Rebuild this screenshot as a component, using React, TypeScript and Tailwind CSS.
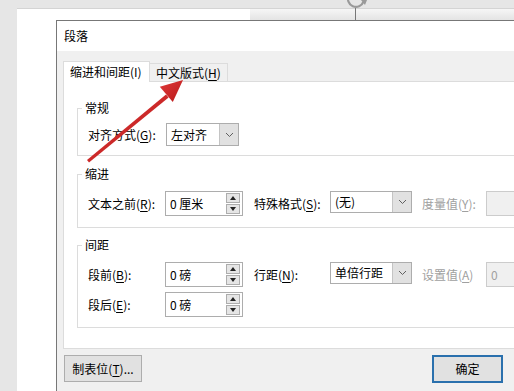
import React from "react";

const U = ({ c }: { c: string }) => <span className="underline underline-offset-2">{c}</span>;

function Chevron() {
  return (
    <svg width="9" height="6" viewBox="0 0 9 6">
      <polyline points="1,1 4.5,4.5 8,1" fill="none" stroke="#606060" strokeWidth="1" />
    </svg>
  );
}

function Dropdown({ text, w, h }: { text: string; w: string; h: string }) {
  return (
    <div className={`shrink-0 flex items-stretch border border-[#adadad] bg-white ${w} ${h}`}>
      <div className="flex-1 flex items-center pl-[4px] text-[12px] text-black">{text}</div>
      <div className="w-[19px] flex items-center justify-center bg-[#e1e1e1] border-l border-[#c4c4c4]">
        <Chevron />
      </div>
    </div>
  );
}

function Spin({ text }: { text: string }) {
  return (
    <div className="shrink-0 flex items-center w-[78px] h-[25px] border border-[#adadad] bg-white">
      <div className="flex-1 pl-[4px] text-[12px] text-black">{text}</div>
      <div className="flex flex-col gap-px mr-[2px]">
        <div className="w-[14px] h-[10px] bg-[#e5e5e5] border border-[#adadad] flex items-center justify-center">
          <svg width="6" height="4" viewBox="0 0 6 4"><polygon points="0,4 3,0 6,4" fill="#222" /></svg>
        </div>
        <div className="w-[14px] h-[10px] bg-[#e5e5e5] border border-[#adadad] flex items-center justify-center">
          <svg width="6" height="4" viewBox="0 0 6 4"><polygon points="0,0 6,0 3,4" fill="#222" /></svg>
        </div>
      </div>
    </div>
  );
}

function Disabled({ text }: { text: string }) {
  return (
    <div className="shrink-0 w-[60px] h-[25px] border border-[#cccccc] bg-[#f0f0f0] flex items-center pl-[4px] text-[12px] text-[#a0a0a0]">
      {text}
    </div>
  );
}

function GroupLabel({ text }: { text: string }) {
  return (
    <div className="-mt-[8px] h-[16px] flex items-center">
      <span className="w-[4px] h-px bg-[#dcdcdc]" />
      <span className="ml-[3px] text-[12px] text-black leading-none">{text}</span>
    </div>
  );
}

export default function App() {
  return (
    <div className="relative w-[514px] h-[391px] overflow-hidden bg-[#e6e6e6] font-['Noto_Sans_CJK_SC','Microsoft_YaHei',sans-serif] text-black">
      <div className="h-[8px]" />
      <div className="flex h-[383px]">
        <div className="w-[17px] shrink-0" />
        <div className="flex-1 bg-white flex flex-col min-w-0">
          {/* ruler band */}
          <div className="h-[12px] border-t border-[#d4d4d4] flex">
            <div className="w-[233px] shrink-0 bg-white" />
            <div className="flex-1 bg-gradient-to-b from-[#f6f6f6] to-[#e4e4e4]" />
          </div>
          {/* dialog */}
          <div className="pl-[39px] flex-1 min-h-0">
            <div className="w-[560px] h-full border-l border-t border-[#777777] bg-[#f0f0f0] flex flex-col">
              <div className="h-[30px] bg-white flex items-center pl-[7px] text-[12px]">段落</div>
              <div className="pl-[6px] pt-[10px] flex flex-col">
                {/* tabs */}
                <div className="h-[20px] flex items-end">
                  <div className="relative z-10 -mb-px h-[21px] w-[87px] bg-white border-l border-t border-r border-[#dcdcdc] flex items-center pl-[6px] text-[12px]">
                    缩进和间距(I)
                  </div>
                  <div className="h-[18px] w-[78px] border-t border-r border-[#dcdcdc] flex items-center pl-[6px] text-[12px] bg-[#f0f0f0]">
                    中文版式(<U c="H" />)
                  </div>
                </div>
                {/* panel */}
                <div className="h-[268px] border border-[#dcdcdc] bg-white flex flex-col pl-[13px]">
                  {/* 常规 */}
                  <div className="mt-[26px] h-[48px] border-l border-b border-[#dcdcdc] flex flex-col">
                    <GroupLabel text="常规" />
                    <div className="mt-[7px] flex items-center pl-[10px]">
                      <span className="shrink-0 w-[78px] text-[12px]">对齐方式(<U c="G" />):</span>
                      <Dropdown text="左对齐" w="w-[73px]" h="h-[23px]" />
                    </div>
                  </div>
                  {/* 缩进 */}
                  <div className="mt-[18px] h-[54px] border-l border-b border-[#dcdcdc] flex flex-col">
                    <GroupLabel text="缩进" />
                    <div className="mt-[9px] flex items-center pl-[10px] h-[25px]">
                      <span className="shrink-0 w-[77px] text-[12px]">文本之前(<U c="R" />):</span>
                      <Spin text="0 厘米" />
                      <span className="shrink-0 ml-[11px] w-[76px] text-[12px]">特殊格式(<U c="S" />):</span>
                      <div className="self-start shrink-0"><Dropdown text="(无)" w="w-[82px]" h="h-[22px]" /></div>
                      <span className="shrink-0 ml-[10px] w-[64px] text-[12px] text-[#a0a0a0]">度量值(<U c="Y" />):</span>
                      <Disabled text="" />
                    </div>
                  </div>
                  {/* 间距 */}
                  <div className="mt-[17px] h-[83px] border-l border-b border-[#dcdcdc] flex flex-col">
                    <GroupLabel text="间距" />
                    <div className="mt-[9px] flex items-center pl-[10px] h-[25px]">
                      <span className="shrink-0 w-[77px] text-[12px]">段前(<U c="B" />):</span>
                      <Spin text="0 磅" />
                      <span className="shrink-0 ml-[11px] w-[76px] text-[12px]">行距(<U c="N" />):</span>
                      <div className="self-start shrink-0"><Dropdown text="单倍行距" w="w-[82px]" h="h-[22px]" /></div>
                      <span className="shrink-0 ml-[10px] w-[64px] text-[12px] text-[#a0a0a0]">设置值(<U c="A" />)</span>
                      <Disabled text="0" />
                    </div>
                    <div className="mt-[5px] flex items-center pl-[10px] h-[25px]">
                      <span className="shrink-0 w-[77px] text-[12px]">段后(<U c="E" />):</span>
                      <Spin text="0 磅" />
                    </div>
                  </div>
                </div>
                {/* buttons */}
                <div className="mt-[6px] flex">
                  <div className="shrink-0 ml-px w-[78px] h-[27px] bg-[#e1e1e1] border border-[#adadad] flex items-center justify-center text-[12px]">
                    制表位(<U c="T" />)...
                  </div>
                  <div className="shrink-0 ml-[290px] w-[71px] h-[28px] bg-[#e1e1e1] border-2 border-[#2a70ad] flex items-center justify-center text-[12px]">
                    确定
                  </div>
                </div>
              </div>
            </div>
          </div>
        </div>
      </div>

      {/* rotate handle + connector (overlay) */}
      <svg className="absolute left-[340px] top-0 pointer-events-none" width="32" height="21" viewBox="0 0 32 21">
        <path d="M 23.5 1.7 A 8 8 0 1 1 20 -8" fill="none" stroke="#9a9a9a" strokeWidth="2.2" />
        <polygon points="21,0 27,0 25,5" fill="#9a9a9a" />
        <line x1="15.5" y1="8" x2="15.5" y2="21" stroke="#777" strokeWidth="1" />
      </svg>

      {/* red annotation arrow */}
      <svg className="absolute left-0 top-0 pointer-events-none" width="514" height="391" viewBox="0 0 514 391">
        <defs>
          <linearGradient id="ar" x1="0" y1="0" x2="1" y2="1">
            <stop offset="0" stopColor="#e03a3a" />
            <stop offset="1" stopColor="#b81818" />
          </linearGradient>
        </defs>
        <polygon points="87,160 89,162.5 168.6,97.5 166,94.5" fill="url(#ar)" />
        <polygon points="183,80 159.8,86.7 172.8,101.9" fill="url(#ar)" />
      </svg>
    </div>
  );
}
